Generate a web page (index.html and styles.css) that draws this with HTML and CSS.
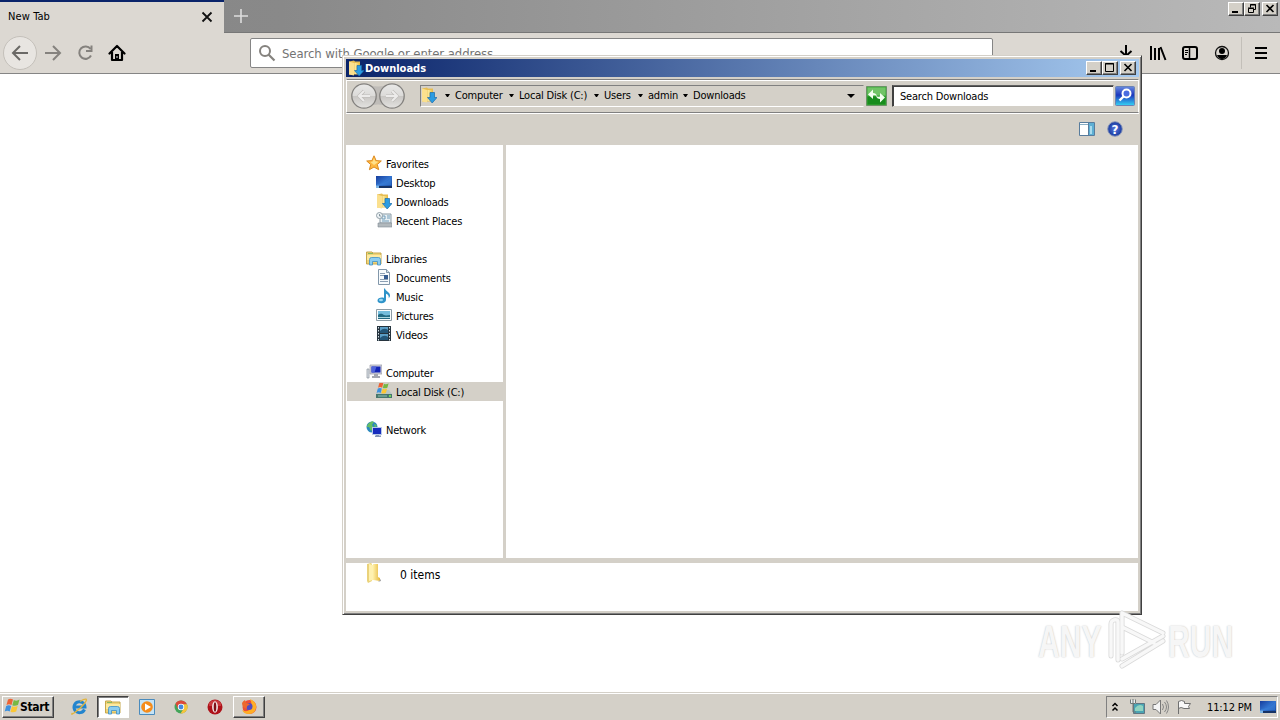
FILE: index.html
```html
<!DOCTYPE html>
<html lang="en">
<head>
  <meta charset="UTF-8"/>
  <title>New Tab</title>
  <link rel="stylesheet" href="styles.css">
</head>
<body>

<!-- shared icons -->
<svg class="defs" width="0" height="0">
  <defs>
    <linearGradient id="gold" x1="0" x2="1"><stop offset="0" stop-color="#fff0a8"/><stop offset="1" stop-color="#e5b83f"/></linearGradient>
    <linearGradient id="blue" x1="0" y1="0" x2="1" y2="1"><stop offset="0" stop-color="#173d9c"/><stop offset=".5" stop-color="#3374d0"/><stop offset="1" stop-color="#17479f"/></linearGradient>
    <linearGradient id="silver" x1="0" y1="0" x2="0" y2="1"><stop offset="0" stop-color="#e9e9e8"/><stop offset=".48" stop-color="#dcdbd9"/><stop offset=".52" stop-color="#c9c7c4"/><stop offset="1" stop-color="#e4e3e1"/></linearGradient>
    <linearGradient id="search" x1="0" y1="0" x2="0" y2="1"><stop offset="0" stop-color="#698bdf"/><stop offset=".45" stop-color="#1c36bd"/><stop offset="1" stop-color="#36d5f5"/></linearGradient>
    <radialGradient id="help"><stop offset="0" stop-color="#5876dd"/><stop offset="1" stop-color="#173a9f"/></radialGradient>
  </defs>
  <symbol id="i-download" viewBox="0 0 16 16">
    <path d="M1 1.500 6 .5l1 1h5v13H1z" fill="#e7bd52"/>
    <path d="M1 1.500 6 3v12.500l-5-1z" fill="#fbe08e"/>
    <path d="M6.500 3H12v11H6.500z" fill="url(#gold)"/>
    <path d="M9 5.500h4.500v5H16L11.200 16 6.500 10.500H9z" fill="#2b9ce2" stroke="#1a6cab" stroke-width=".7"/>
  </symbol>
  <symbol id="i-star" viewBox="0 0 16 16">
    <path d="m8 .8 2.100 4.800 5.200.4-4 3.500 1.400 5.200L8 12l-4.600 2.700 1.300-5.200L.7 6l5.200-.4z" fill="#ffb83f" stroke="#dc8a21"/>
    <path d="m8 3 1.200 3.300 3.200.4L8 10 4.500 7l2.300-.5z" fill="#ffe08a"/>
  </symbol>
  <symbol id="i-desktop" viewBox="0 0 16 16">
    <path d="M0 2h16v12H0z" fill="url(#blue)"/>
    <path d="M1 10c5 0 10-2 14-6v7H1z" fill="#3d83dc" opacity=".5"/>
    <path d="M0 12h16v2H0z" fill="#173365"/><path d="M0 11.500h3V14H0z" fill="#7cb6e8"/>
  </symbol>
  <symbol id="i-recent" viewBox="0 0 16 16">
    <path d="M4 2h11v9H4z" fill="#e8f0f4" stroke="#8b9ba5"/>
    <path d="M6 4h3v3H6zM11 4h3M11 6h3M6 9h7" fill="none" stroke="#719cb9"/>
    <path d="M2 11h14v4H2z" fill="#b1b8bc" stroke="#818c93" stroke-width=".6"/>
    <circle cx="3.500" cy="3.500" r="3" fill="#eef3f6" stroke="#93a0a8"/><path d="M3.500 2v2H5" fill="none" stroke="#607582" stroke-width=".7"/>
  </symbol>
  <symbol id="i-library" viewBox="0 0 16 16">
    <path d="M.5 2H6l1 1h8v11H.5z" fill="#efd377" stroke="#c6a74c"/>
    <path d="M1 5h14v5H1z" fill="#fdeaa0"/><path d="M2 3.500h5" stroke="#87b960"/>
    <path d="M3.500 15V9.500Q3.500 7.500 5.500 7.500h7q2 0 2 2V15h-3v-3.500h-5V15z" fill="#8bcdf0" stroke="#3d8fc8" stroke-width=".8"/>
  </symbol>
  <symbol id="i-document" viewBox="0 0 16 16">
    <path d="M2.500.5h8l3 3v12h-11z" fill="#f8fbfd" stroke="#8297aa"/>
    <path d="M10.500.5v3h3" fill="#d3e0ea" stroke="#8297aa"/>
    <path d="M4 4.500h5M4 6.500h4M4 10.500h8M4 12.500h8" stroke="#8ca0b5"/><path d="M8 6h4v4H8z" fill="#365d91"/>
  </symbol>
  <symbol id="i-music" viewBox="0 0 16 16">
    <path d="M9 .5c.5 3 5 3.500 5 7 0 1-.5 2-1.200 2.700.2-3-1.300-4-2.800-4.500V12c0 2-2 3.200-4.500 3.200S1.500 14.200 1.500 12.500 3.500 9.500 6 9.500c.8 0 1.500.1 2 .4V.5z" fill="#2e93c9"/>
    <ellipse cx="5" cy="12" rx="2" ry="1.200" fill="#9bd9f3"/>
  </symbol>
  <symbol id="i-picture" viewBox="0 0 16 16">
    <path d="M.5 2.500h15v11H.5z" fill="#f9fcfd" stroke="#8d9ca5"/>
    <path d="M2 4h12v8H2z" fill="#75bddc"/><path d="M2 8c3-2 4-1 6 0s4 0 6 0v4H2z" fill="#236b84"/><path d="M2 10h12v1H2z" fill="#a9d7df"/>
  </symbol>
  <symbol id="i-video" viewBox="0 0 16 16">
    <path d="M1 0h14v15H1z" fill="#26343e"/><path d="M4 1h8v6H4zM4 8h8v6H4z" fill="#5c9fc7"/>
    <path d="M4 5q4-4 8-1v3H4zM4 12q4-4 8-1v3H4z" fill="#235678"/>
    <path d="M2.500 1v14M13.500 1v14" stroke="#d5e0e8" stroke-dasharray="1.500 1.500"/>
  </symbol>
  <symbol id="i-computer" viewBox="0 0 16 16">
    <path d="M4 1h12v9H4z" fill="#d1d2dc" stroke="#9698a8" stroke-width=".7"/><path d="M5.500 2.500h9v6h-9z" fill="#1224b7"/><path d="M5.500 2.500h5l-2 6h-3z" fill="#4f63da"/>
    <path d="M8 10h4v2h2v2H6v-2h2z" fill="#a3a6b0"/><path d="M1 5h2v9H1z" fill="#dce1e6" stroke="#8b929b" stroke-width=".7"/>
  </symbol>
  <symbol id="i-flag" viewBox="0 0 16 16">
    <path d="M4 1.500q2.500-1.500 5 0L7.500 7Q5 5.500 2.500 7z" fill="#ed6335"/><path d="M9.800 2q3 1.500 5.700-.5L14 7q-3 1.500-5.700.3z" fill="#77b843"/>
    <path d="M2.200 8q2.500-1.500 5 0l-1.500 5.500Q3.500 12 .7 13.500z" fill="#3d91df"/><path d="M8 8.300q3 1.200 5.700-.3l-1.500 5.500q-3 1.500-5.700.2z" fill="#fbc735"/>
  </symbol>
  <symbol id="i-disk" viewBox="0 0 16 16">
    <path d="m0 11 2-4h11l3 4v4H0z" fill="#b9c6c5"/><path d="M0 11h16v4H0z" fill="#47766d"/><path d="M2 13h9" stroke="#8fc0b4"/><path d="M13 12h2v2h-2z" fill="#72d45d"/>
    <use href="#i-flag" x="0" y="-1" width="13" height="13"/>
  </symbol>
  <symbol id="i-network" viewBox="0 0 16 16">
    <circle cx="6" cy="6" r="5.500" fill="#2b88be"/><path d="M2 3q4-4 6-2L6 4l2 3-3 3-2-4H.700zM8 3l3 1-2 3z" fill="#65bd63"/>
    <path d="M6 6h10v8H6z" fill="#b7c8e9"/><path d="M7 7h8v6H7z" fill="#172cbe"/><path d="M10 14h3v.5h2V16H9v-1.500h1z" fill="#8495b8"/>
  </symbol>
</svg>

<div class="browser">
  <div class="tab-bar">
    <div class="tab">
      <span>New Tab</span>
      <svg width="12" height="12" viewBox="0 0 12 12"><path d="m1.500 1.500 9 9m0-9-9 9" stroke="#111" stroke-width="1.800"/></svg>
    </div>
    <svg class="new-tab" width="16" height="16" viewBox="0 0 16 16"><path d="M8 1v14M1 8h14" stroke="#ddd" stroke-width="1.600"/></svg>
    <div class="win-buttons">
      <button><svg width="14" height="12"><path d="M3 9h6" stroke="#000" stroke-width="2"/></svg></button>
      <button><svg width="14" height="12"><path d="M5.500 4.500v-3h5v5h-2M5 2h6M3.500 5.500h5v4h-5zM3 5h6" fill="none" stroke="#000"/></svg></button>
      <button class="close"><svg width="14" height="12"><path d="m3.500 2 7 7m0-7-7 7" stroke="#000" stroke-width="1.600"/></svg></button>
    </div>
  </div>

  <div class="nav-bar">
    <div class="nav-buttons">
      <span class="back"><svg width="18" height="18" viewBox="0 0 18 18"><path d="M17 9H2m7-7L2 9l7 7" fill="none" stroke="#6b6966" stroke-width="2"/></svg></span>
      <svg width="18" height="18" viewBox="0 0 18 18"><path d="M1 9h15M9 2l7 7-7 7" fill="none" stroke="#85827e" stroke-width="2"/></svg>
      <svg width="18" height="18" viewBox="0 0 18 18"><path d="M14.500 5A6.200 6.200 0 1 0 15 11.500M15.500 1.500V7H10" fill="none" stroke="#85827e" stroke-width="2"/></svg>
      <svg width="18" height="18" viewBox="0 0 18 18"><path d="M1.500 9.500 9 2l7.500 7.500M4 8v8h10V8" fill="none" stroke="#000" stroke-width="2.200" stroke-linejoin="round" stroke-linecap="round"/><path d="M7 10h4v6H7z"/><path d="M8.500 12h1v2h-1z" fill="#ddd"/></svg>
    </div>
    <div class="url-bar">
      <svg width="18" height="18" viewBox="0 0 18 18"><circle cx="7" cy="7" r="5" fill="none" stroke="#85827e" stroke-width="2"/><path d="m10.500 10.500 6 6" stroke="#85827e" stroke-width="2.200"/></svg>
      <span>Search with Google or enter address</span>
    </div>
    <div class="tools">
      <svg width="18" height="18" viewBox="0 0 18 18"><path d="M9 1v11M3.500 7 9 12l5.500-5" fill="none" stroke="#000" stroke-width="2"/></svg>
      <svg width="18" height="18" viewBox="0 0 18 18"><path d="M2 2v14M6 4v12M10 4v12M11.500 3l5 13" stroke="#000" stroke-width="2"/></svg>
      <svg width="18" height="18" viewBox="0 0 18 18"><rect x="2" y="3" width="14" height="12" rx="2" fill="none" stroke="#000" stroke-width="2"/><path d="M8.500 3v12" stroke="#000" stroke-width="1.500"/><path d="M4 6.500h3M4 8.500h3M4 10.500h2" stroke="#000"/></svg>
      <svg width="18" height="18" viewBox="0 0 18 18"><circle cx="9" cy="9" r="6.500" fill="none" stroke="#111" stroke-width="1.300"/><circle cx="9" cy="7" r="3"/><path d="M4 11h10q-1.500 4-5 4t-5-4z"/></svg>
      <i class="divider"></i>
      <svg width="18" height="18" viewBox="0 0 18 18"><path d="M3 4h12M3 9h12M3 14h12" stroke="#000" stroke-width="2"/></svg>
    </div>
  </div>
  <div class="page"></div>
</div>

<div class="taskbar">
  <button class="start"><svg width="18" height="18"><use href="#i-flag" width="16" height="16"/></svg><span>Start</span></button>
  <div class="tasks">
    <span class="task"><svg width="18" height="18" viewBox="0 0 18 18"><path d="M14.500 11.500A5.500 5.500 0 1 1 15 9H5" fill="none" stroke="#2385ce" stroke-width="3"/><path d="M2.500 15C-1 19 9 12 14 6s1.500-6-4-2.500" fill="none" stroke="#e3b53b" stroke-width="1.300"/></svg></span>
    <span class="task pressed"><svg width="16" height="16"><use href="#i-library"/></svg></span>
    <span class="task"><svg width="18" height="18" viewBox="0 0 18 18"><path d="M1.500 1.500h15v15h-15z" fill="#c5e3f6" stroke="#4a8bbd"/><circle cx="9" cy="9" r="5.800" fill="#f58c1b"/><path d="m7 5.500 6 3.500-6 3.500z" fill="#fff"/></svg></span>
    <span class="task"><svg width="18" height="18" viewBox="0 0 18 18"><circle cx="9" cy="9" r="6.500" fill="#43a459"/><path d="M3.500 5.500A6.500 6.500 0 0 1 15 6.500H9L6 11z" fill="#dc493a"/><path d="M9 6.300h6A6.500 6.500 0 0 1 8.500 15.500L12 10z" fill="#f5c43c"/><circle cx="9" cy="9" r="3.200" fill="#fff"/><circle cx="9" cy="9" r="2.400" fill="#4388df"/></svg></span>
    <span class="task"><svg width="18" height="18" viewBox="0 0 18 18"><circle cx="9" cy="9" r="7.500" fill="#ae1119"/><path d="M3 5q6-6 12 0v3H3z" fill="#c93a3e"/><ellipse cx="9" cy="9" rx="2.900" ry="5.700" fill="#f3eaea"/><ellipse cx="9" cy="9" rx="1.300" ry="4.800" fill="#7f1016"/></svg></span>
    <span class="task raised"><svg width="18" height="18" viewBox="0 0 18 18"><circle cx="9.500" cy="9" r="7" fill="#ef4e35"/><path d="M10 1q7 3 6 9t-8 6q-4 0-6-4 5 3 8-1t0-10z" fill="#ffae25"/><circle cx="9" cy="8.500" r="3.500" fill="#514ac1"/><path d="M2 5q1-2 3-3l1 3q3 0 4 2-4 0-3 4-5-1-5-6z" fill="#ed682c"/></svg></span>
  </div>
  <div class="tray">
    <svg width="8" height="12" viewBox="0 0 8 12"><path d="m1.500 5 2.500-2.500L6.500 5M1.500 9.500 4 7l2.500 2.500" fill="none" stroke="#000" stroke-width="1.500"/></svg>
    <svg class="net" width="16" height="16" viewBox="0 0 16 16"><path d="M4.500 4.500h11v10h-11z" fill="#4aa4b3" stroke="#607583"/><path d="M6 9q4-5 8-2v5H6z" fill="#91d3c0"/><path d="M1 1h6v4H1z" fill="#eee"/><path d="M1.500.5v4h5v-4M4 5v8h3M4 0v4" fill="none" stroke="#6d7776"/></svg>
    <svg class="sound" width="17" height="16" viewBox="0 0 17 16"><path d="M1 5.500h3L8.500 1v14L4 10.500H1z" fill="#f4f4f4" stroke="#777"/><path d="M10.500 5q2 3 0 6M12.500 3q4 5 0 10M14.500 1.500q4 6.500 0 13" fill="none" stroke="#858585"/></svg>
    <svg class="flag" width="17" height="16" viewBox="0 0 17 16"><path d="M2.500 15V2.500q3-2 6 0v2h6l-2 3 1 2H8q-3-2-5.500 0" fill="#f8f8f8" stroke="#707070"/></svg>
    <span class="clock">11:12 PM</span>
    <svg width="16" height="16"><use href="#i-desktop"/></svg>
  </div>
</div>

<div class="window">
  <div class="title-bar">
    <svg width="16" height="16"><use href="#i-download"/></svg>
    <span>Downloads</span>
    <div class="win-buttons">
      <button><svg width="14" height="12"><path d="M3 9h6" stroke="#000" stroke-width="2"/></svg></button>
      <button><svg width="14" height="12"><path d="M2.500 1.500h8v8h-8zM2 2h9" fill="none" stroke="#000"/></svg></button>
      <button class="close"><svg width="14" height="12"><path d="m3.500 2 7 7m0-7-7 7" stroke="#000" stroke-width="1.600"/></svg></button>
    </div>
  </div>

  <div class="address-row">
    <svg class="travel" width="56" height="28" viewBox="0 0 56 28">
      <path d="M14 2q14 5 28 0v23q-14-5-28 0z" fill="#bfbcb8"/>
      <circle cx="14" cy="14" r="12.200" fill="url(#silver)" stroke="#84827f" stroke-width="1.300"/><circle cx="42" cy="14" r="12.200" fill="url(#silver)" stroke="#84827f" stroke-width="1.300"/>
      <path d="M20 14H9m5-5-5 5 5 5M36 14h11m-5-5 5 5-5 5" fill="none" stroke="#bcbab7" stroke-width="3.200"/>
      <path d="M20 14H9m5-5-5 5 5 5M36 14h11m-5-5 5 5-5 5" fill="none" stroke="#ecebea" stroke-width="2.200"/>
    </svg>
    <div class="crumbs">
      <svg class="crumb-icon" width="16" height="16"><use href="#i-download"/></svg>
      <i class="arrow"></i><span class="c1">Computer</span>
      <i class="arrow"></i><span class="c2">Local Disk (C:)</span>
      <i class="arrow"></i><span class="c3">Users</span>
      <i class="arrow"></i><span class="c4">admin</span>
      <i class="arrow"></i><span class="c5">Downloads</span>
      <i class="arrow drop"></i>
    </div>
    <svg class="refresh" width="21" height="20" viewBox="0 0 21 20"><path d="M.5.500h20v19H.5z" fill="#3daa3a" stroke="#6a9366"/><path d="M1.500 1.500h18v8h-18z" fill="#71c467"/><path d="M1.500 10.500h18v8h-18z" fill="#188c1d"/><path d="m2 8.500 5-5V7q3 0 4 3-2-1-4-.5V13zM19 11.500l-5 5V13q-3 0-4-3 2 1 4 .5V7z" fill="#f3fff0"/></svg>
    <div class="search-box">Search Downloads</div>
    <svg class="search-go" width="20" height="20" viewBox="0 0 20 20"><rect x=".5" y=".5" width="19" height="19" rx="1" fill="url(#search)" stroke="#6a83b5"/><circle cx="11.500" cy="7.500" r="4" fill="#4a6ce0" stroke="#fff" stroke-width="2"/><path d="m8.500 10.500-4 4" stroke="#fff" stroke-width="2.400"/></svg>
  </div>

  <div class="command-bar">
    <svg width="16" height="14" viewBox="0 0 16 14"><path d="M.5.500h15v13H.5z" fill="#fff" stroke="#587c9d"/><path d="M1 2.500h14" stroke="#88aec5"/><path d="M10 1h5v12h-5z" fill="#5eafd4"/><path d="M11 4h2v8h-2z" fill="#a9dbed"/><path d="M9.500 1v12" stroke="#587c9d"/></svg>
    <svg width="16" height="16" viewBox="0 0 16 16"><circle cx="8" cy="8" r="7.300" fill="url(#help)" stroke="#8c99ba"/><text x="8" y="12.500" text-anchor="middle" class="help-mark">?</text></svg>
  </div>

  <div class="panes">
    <div class="tree">
      <div class="row"><svg width="16" height="16"><use href="#i-star"/></svg><span>Favorites</span></div>
      <div class="row sub"><svg width="16" height="16"><use href="#i-desktop"/></svg><span>Desktop</span></div>
      <div class="row sub"><svg width="16" height="16"><use href="#i-download"/></svg><span>Downloads</span></div>
      <div class="row sub"><svg width="16" height="16"><use href="#i-recent"/></svg><span>Recent Places</span></div>
      <div class="row group"><svg width="16" height="16"><use href="#i-library"/></svg><span>Libraries</span></div>
      <div class="row sub"><svg width="16" height="16"><use href="#i-document"/></svg><span>Documents</span></div>
      <div class="row sub"><svg width="16" height="16"><use href="#i-music"/></svg><span>Music</span></div>
      <div class="row sub"><svg width="16" height="16"><use href="#i-picture"/></svg><span>Pictures</span></div>
      <div class="row sub"><svg width="16" height="16"><use href="#i-video"/></svg><span>Videos</span></div>
      <div class="row group"><svg width="16" height="16"><use href="#i-computer"/></svg><span>Computer</span></div>
      <div class="row sub selected"><svg width="16" height="16"><use href="#i-disk"/></svg><span>Local Disk (C:)</span></div>
      <div class="row group"><svg width="16" height="16"><use href="#i-network"/></svg><span>Network</span></div>
    </div>
    <div class="files"></div>
  </div>

  <div class="details">
    <svg width="18" height="21" viewBox="0 0 18 21"><path d="m2 1 4-1 1 1v17l-4 2-1-2z" fill="#ead27a"/><path d="m4 1 4 1v15l-4 1z" fill="#fff1af"/><path d="M8 1h5v13l2 1v3l-7-1z" fill="url(#gold)"/><path d="m13 19 3-3v2z" fill="#aaa"/></svg>
    <span>0 items</span>
  </div>
</div>

<div class="watermark">
  <span class="word"><b>ANY</b></span>
  <svg width="62" height="64" viewBox="0 0 62 64">
    <g fill="none" stroke-linejoin="round" stroke-linecap="round">
      <path d="M12 51V13q0-3-4-2-3 1-3 4v32M16 4v14l32 16M16 4v40M16 4l41 20M57 32 16 57m41-30L16 50" stroke="#dadada" stroke-width="5"/>
      <path d="M12 51V13q0-3-4-2-3 1-3 4v32M16 4v14l32 16M16 4v40M16 4l41 20M57 32 16 57m41-30L16 50" stroke="#f8f8f8" stroke-width="3.400"/>
    </g>
  </svg>
  <span class="word run"><b>RUN</b></span>
</div>

</body>
</html>
```
FILE: styles.css
```css
body {
  margin: 0;
  width: 1280px;
  height: 720px;
  overflow: hidden;
  display: flex;
  flex-direction: column;
  background: #fff;
  color: #000;
  font-family: "DejaVu Sans Condensed", "DejaVu Sans", sans-serif;
  font-stretch: condensed;
  font-size: 11px;
  letter-spacing: -0.2px;
  white-space: nowrap;
}

* {
  box-sizing: border-box;
}

svg {
  display: block;
  flex: none;
}

.defs {
  position: absolute;
}

button {
  font: inherit;
  letter-spacing: inherit;
  margin: 0;
  padding: 0;
  color: #000;
  background: #d4d0c8;
  border: 1px solid;
  border-color: #fff #404040 #404040 #fff;
  box-shadow: inset -1px -1px #808080;
}

/* browser */
.browser {
  flex: 1;
  display: flex;
  flex-direction: column;
}

.tab-bar {
  height: 33px;
  display: flex;
  align-items: flex-start;
  background: linear-gradient(90deg, #858585, #898989 22%, #b9b9b9);
  box-shadow: inset 0 -1px #777;
}

.tab {
  width: 224px;
  height: 33px;
  padding: 0 11px 2px 8px;
  display: flex;
  align-items: center;
  justify-content: space-between;
  background: #dcd8d2;
  border-top: 2px solid #0a246a;
  letter-spacing: 0.1px;
}

.new-tab {
  margin: 8px 0 0 9px;
}

.win-buttons {
  margin-left: auto;
  display: flex;
}

.win-buttons button {
  width: 16px;
  height: 14px;
}

.win-buttons .close {
  margin-left: 2px;
}

.tab-bar .win-buttons {
  padding: 2px 2px 0 0;
}

.nav-bar {
  height: 41px;
  display: flex;
  align-items: center;
  background: #dcd8d2;
  border-bottom: 1px solid #858585;
}

.nav-buttons {
  width: 250px;
  padding-left: 3px;
  display: flex;
  align-items: center;
  gap: 14px;
}

.back {
  width: 34px;
  height: 34px;
  margin-right: -7px;
  display: grid;
  place-items: center;
  border: 1px solid #c4c0ba;
  border-radius: 50%;
  background: #e8e5e1;
}

.url-bar {
  width: 743px;
  height: 30px;
  margin-top: -1px;
  padding-left: 7px;
  display: flex;
  align-items: center;
  gap: 6px;
  background: #fff;
  border: 1px solid #858585;
  border-radius: 2px;
  color: #737373;
  font-size: 13px;
  letter-spacing: -0.08px;
}

.url-bar span {
  padding-top: 2px;
}

.tools {
  margin-left: auto;
  padding-right: 10px;
  display: flex;
  align-items: center;
  gap: 14px;
}

.divider {
  width: 1px;
  height: 32px;
  margin: 0 -4px;
  background: #c3bfb9;
}

.page {
  flex: 1;
  background: #fff;
}

/* taskbar */
.taskbar {
  height: 28px;
  padding: 1px 2px 0;
  display: flex;
  align-items: center;
  background: #d4d0c8;
  border-top: 1px solid #d4d0c8;
  box-shadow: inset 0 1px #fff;
}

.start {
  width: 52px;
  height: 22px;
  padding-left: 1px;
  display: flex;
  align-items: center;
  font-weight: bold;
  font-size: 12px;
  letter-spacing: -0.3px;
}

.start svg {
  margin-right: -2px;
}

.tasks {
  margin-left: 9px;
  display: flex;
  gap: 2px;
}

.task {
  width: 32px;
  height: 22px;
  display: grid;
  place-items: center;
  border: 1px solid transparent;
}

.pressed {
  background: #fff;
  border-color: #404040 #fff #fff #404040;
  box-shadow: inset 1px 1px #808080;
}

.raised {
  border-color: #fff #404040 #404040 #fff;
  box-shadow: inset -1px -1px #808080;
}

.tray {
  width: 172px;
  height: 22px;
  margin-left: auto;
  padding: 0 1px 0 4px;
  display: flex;
  align-items: center;
  border: 1px solid;
  border-color: #808080 #fff #fff #808080;
}

.net {
  margin-left: 10px;
}

.sound,
.flag {
  margin-left: 7px;
}

.clock {
  margin: 0 8px 0 auto;
  letter-spacing: -0.15px;
}

/* explorer */
.window {
  position: absolute;
  left: 342px;
  top: 55px;
  width: 800px;
  height: 560px;
  padding: 2px;
  display: flex;
  flex-direction: column;
  background: #d4d0c8;
  border: 1px solid;
  border-color: #d4d0c8 #404040 #404040 #d4d0c8;
  box-shadow: inset 1px 1px #fff, inset -1px -1px #808080;
}

.title-bar {
  height: 18px;
  margin: 1px 0 0 1px;
  padding: 0 3px 0 2px;
  display: flex;
  align-items: center;
  gap: 1px;
  background: linear-gradient(90deg, #0a246a, #a6caf0);
  color: #fff;
  font-weight: bold;
  letter-spacing: 0;
}

.address-row {
  height: 34px;
  margin: 2px 0 0 1px;
  padding: 0 0 0 3px;
  display: flex;
  align-items: center;
  border: 1px solid;
  border-color: #808080 #fff #808080 #fff;
  box-shadow: inset 0 1px #fff, 0 1px #fff;
}

.travel {
  margin-left: -0.5px;
}

.crumbs {
  width: 444px;
  height: 22px;
  margin-left: 14.5px;
  padding-left: 2px;
  display: flex;
  align-items: center;
  border: 1px solid;
  border-color: #808080 transparent #fff #808080;
}

.crumbs span {
  padding-bottom: 2px;
}

.crumb-icon {
  margin: -2px 8px 0 -2px;
}

.arrow {
  width: 5px;
  margin: -1px 5px 0 0;
  border: solid transparent;
  border-width: 3px 2.5px 0;
  border-top-color: #000;
}

.c1 { width: 54px; }
.c2 { width: 75px; }
.c3 { width: 34px; }
.c4 { width: 35px; }

.drop {
  width: 8px;
  margin: 0 8px 0 auto;
  border-width: 4px 4px 0;
}

.refresh {
  margin-left: 2px;
}

.search-box {
  width: 222px;
  height: 22px;
  margin-left: 5px;
  padding: 0 0 0 7px;
  line-height: 21px;
  background: #fff;
  border: 1px solid;
  border-color: #606060 #d4d0c8 #d4d0c8 #404040;
  box-shadow: inset 1px 1px #404040;
}

.search-go {
  margin-left: 1px;
}

.command-bar {
  height: 32px;
  padding-right: 16px;
  display: flex;
  align-items: center;
  justify-content: flex-end;
  gap: 12px;
}

.help-mark {
  font: bold 12px "DejaVu Sans", sans-serif;
  fill: #fff;
}

.panes {
  height: 413px;
  margin: 0 1px;
  display: flex;
  gap: 3px;
}

.tree {
  width: 157px;
  padding: 9px 0 0 1px;
  background: #fff;
}

.files {
  flex: 1;
  background: #fff;
}

.row {
  height: 19px;
  padding-left: 19px;
  display: flex;
  align-items: center;
  gap: 4px;
}

.row svg {
  margin-top: -1px;
}

.row span {
  padding-top: 1px;
}

.sub {
  padding-left: 29px;
}

.group {
  margin-top: 19px;
}

.selected {
  background: #d4d0c8;
}

.details {
  height: 48px;
  margin: 5px 1px 0;
  padding-left: 19px;
  display: flex;
  align-items: flex-start;
  gap: 17px;
  background: #fff;
  font-size: 12px;
  letter-spacing: 0;
}

.details span {
  padding-top: 5px;
}

.watermark {
  position: absolute;
  left: 1038px;
  top: 609px;
  display: flex;
  align-items: center;
}

.word {
  width: 68px;
  height: 64px;
}

.word b {
  display: inline-block;
  color: #f6f6f6;
  font: bold 45px/66px "Liberation Sans", sans-serif;
  letter-spacing: 0;
  text-shadow: 0 0 2px #bbb;
  transform: scaleX(0.67);
  transform-origin: left;
}

.run {
  padding-left: 0;
}
```
